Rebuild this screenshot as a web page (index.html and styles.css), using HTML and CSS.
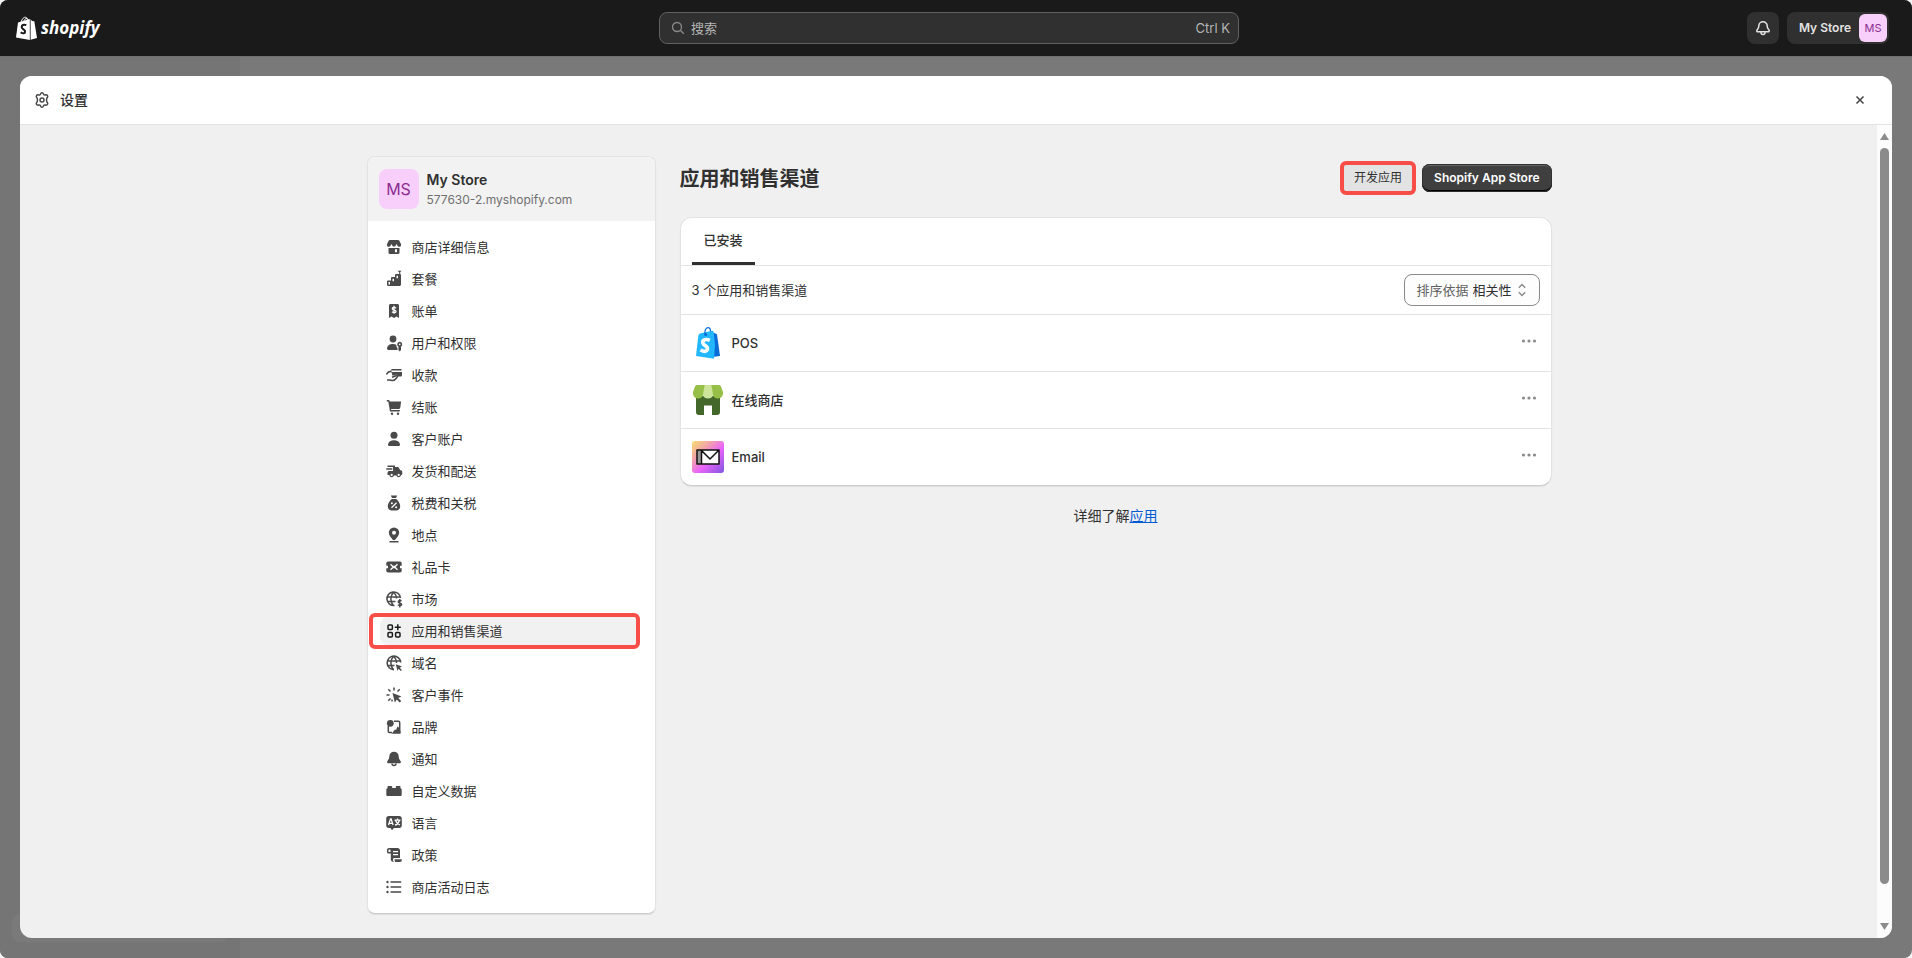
FILE: index.html
```html
<!DOCTYPE html>
<html lang="zh-CN">
<head>
<meta charset="utf-8">
<meta name="viewport" content="width=device-width, initial-scale=1">
<title>设置 · My Store · Shopify</title>
<link rel="stylesheet" href="styles.css">
</head>
<body>
<div class="frame">
  <header class="topbar">
    <a class="logo" href="#" aria-label="shopify">
      <svg class="logo-bag" viewBox="0 0 21 24" aria-hidden="true">
        <path d="M5 6.500C6 2.600 8 .900 9.700 1.300c1.300.3 1.800 1.700 1.900 3.700M7.500 5.800C8.300 3.500 9.600 2.200 11 2.600c.9.300 1.400 1.200 1.600 2.400" fill="none" stroke="#fff" stroke-width="1"/>
        <path d="M2 6.400 13.800 3v21L0 21.500z" fill="#fff"/>
        <path d="m14.600 3.200 1.500 1.700 2.200.3L21 22l-6.400 1.700z" fill="#fff"/>
        <path d="M10.300 9.200C7.600 8 5.500 9.200 5.700 11.200c.2 2.200 3.600 2.300 3.400 4.600-.2 2-2.500 2-4.400.5" fill="none" stroke="#1a1a1a" stroke-width="2"/>
      </svg>
      <span class="logo-text">shopify</span>
    </a>
    <label class="search">
      <svg viewBox="0 0 14 14" aria-hidden="true"><circle cx="6" cy="6" r="4.500"/><path d="m9.300 9.300 3.500 3.500"/></svg>
      <input type="search" placeholder="搜索" aria-label="搜索">
      <kbd>Ctrl K</kbd>
    </label>
    <div class="topbar-actions">
      <button class="bell" type="button" aria-label="通知">
        <svg viewBox="0 0 20 20" aria-hidden="true"><path d="M10 3.700A4.200 4.200 0 0 0 5.800 7.900c0 2.400-1.300 3.200-1.900 4.300-.4.800.1 1.600.9 1.600h10.400c.8 0 1.300-.8.900-1.600-.6-1.100-1.900-1.900-1.900-4.300A4.200 4.200 0 0 0 10 3.700ZM8 14v.6a2 2 0 0 0 4 0V14"/></svg>
      </button>
      <button class="account" type="button"><span>My Store</span><span class="avatar avatar-small">MS</span></button>
    </div>
  </header>

  <div class="backdrop">
    <div class="dimmed-nav"><div class="dimmed-item"></div></div>
    <section class="modal" aria-label="设置">
      <header class="modal-header">
        <svg class="gear" viewBox="0 0 20 20" aria-hidden="true"><path d="M8.600 3.900c.2-.8.600-1.200 1.400-1.200s1.200.4 1.400 1.200c.2.900 1 1.400 1.900 1.100 1.100-.4 1.700-.2 2.200.6.500.8.400 1.300-.3 2-.9.900-.9 3.900 0 4.800.7.700.8 1.200.3 2-.5.800-1.100 1-2.200.6-.9-.3-1.700.2-1.900 1.100-.2.800-.6 1.200-1.400 1.200s-1.200-.4-1.400-1.200c-.2-.9-1-1.400-1.900-1.100-1.100.4-1.700.2-2.200-.6-.5-.8-.4-1.300.3-2 .9-.9.900-3.900 0-4.800-.7-.7-.8-1.200-.3-2 .5-.8 1.100-1 2.200-.6.900.3 1.700-.2 1.900-1.100Z"/><circle cx="10" cy="10" r="2"/></svg>
        <h1>设置</h1>
        <button class="close" type="button" aria-label="关闭"><svg viewBox="0 0 10 10" aria-hidden="true"><path d="m1.500 1.500 7 7m0-7-7 7"/></svg></button>
      </header>
      <div class="modal-body">
        <div class="content">
          <aside class="card sidebar">
            <div class="store">
              <span class="avatar avatar-large">MS</span>
              <div class="store-text"><p class="store-name">My Store</p><p class="store-domain">577630-2.myshopify.com</p></div>
            </div>
            <nav aria-label="设置">
              <ul class="menu">
                <li><a href="#"><svg viewBox="0 0 20 20"><path d="M6 3h8c.7 0 1.200.3 1.500.9L17 7v1.200c0 2-3 2.300-3.600.3L12.600 7l-.9 1.500c-.5 1.500-2.900 1.500-3.400 0L7.400 7l-.8 1.500C6 10.500 3 10.200 3 8.200V7l1.500-3.100C4.800 3.300 5.300 3 6 3z"/><path fill-rule="evenodd" d="M4.500 11h11v4.500A1.500 1.500 0 0 1 14 17H6a1.500 1.500 0 0 1-1.500-1.500zM11 12.200v3h2v-3z"/></svg>商店详细信息</a></li>
                <li><a href="#"><svg viewBox="0 0 20 20"><path d="M13.500 1.800h4l-1.300 1.400v2h-1v-2z"/><path fill-rule="evenodd" d="M3.800 11.500H7V9.200C7 8.500 7.500 8 8.200 8H11V6.200c0-.7.500-1.200 1.200-1.200h3.600c.7 0 1.200.5 1.200 1.200v9.300c0 .8-.7 1.500-1.500 1.500H4.200C3.500 17 3 16.500 3 15.800v-3.300c0-.6.300-1 .8-1zM4.500 13v2.500H6V13zm4-3.200v2.500H10V9.800zm4-3v2.500H14V6.800z"/></svg>套餐</a></li>
                <li><a href="#"><svg viewBox="0 0 20 20"><path d="M6.500 3h7C14.400 3 15 3.600 15 4.500V17l-2.500-1.500L10 17l-2.500-1.500L5 17V4.500C5 3.600 5.600 3 6.500 3z"/><path class="cut" d="M12 7.200C10.800 6 8.300 6.200 8.300 7.700c0 1.800 3.700.9 3.700 2.700 0 1.600-2.700 1.600-4 .4M10 4.800v8"/></svg>账单</a></li>
                <li><a href="#"><svg viewBox="0 0 20 20"><circle cx="9" cy="6" r="3.400"/><path d="M3 15.200C3.300 12.500 6 11 9 11c1.300 0 2.300.2 3.300.7 0 1.500.4 2.500 1.200 3.300v2H4.600C3.700 17 3 16.200 3 15.200z"/><path fill-rule="evenodd" d="M15.700 8.800a2.600 2.600 0 0 1 1.300 4.800V17l-1.300 1.400-1.300-1.400v-3.400a2.600 2.600 0 0 1 1.300-4.800zm0 1.600a.9.900 0 1 0 0 1.800.9.900 0 0 0 0-1.800z"/></svg>用户和权限</a></li>
                <li><a href="#"><svg viewBox="0 0 20 20"><path d="M8 4h9.500v1.500H6zM7 7h11v3.200c0 .8-.6 1.300-1.300 1.300h-3c0-1.500-.9-2-2-1.700L9 10.700c-1-.5-1.300-1.300-.7-2.200z"/><path class="line" d="M2.500 9.500c1.500-3 3-3.500 5-2.700M3 15h2.500c1.500 0 1.800.6 3.200.6 2.300 0 3.500-2.200 4.500-3.600.7-1.100-.2-1.700-1.300-1.300L8 12.200"/></svg>收款</a></li>
                <li><a href="#"><svg viewBox="0 0 20 20"><path d="M2.800 3h1.500c.8 0 1.300.5 1.500 1.500h11.300l-.8 6c-.1.900-.8 1.500-1.700 1.500H7l.2 1h8.600v1.500H6L4.300 4.500H2.800z"/><circle cx="8" cy="16.800" r="1.200"/><circle cx="14" cy="16.800" r="1.200"/></svg>结账</a></li>
                <li><a href="#"><svg viewBox="0 0 20 20"><circle cx="10" cy="6.300" r="3.500"/><path d="M4 15.500C4.400 12.700 7 11.300 10 11.300s5.600 1.400 6 4.200c.1.900-.4 1.500-1.300 1.500H5.300c-.9 0-1.400-.6-1.300-1.500z"/></svg>客户账户</a></li>
                <li><a href="#"><svg viewBox="0 0 20 20"><path d="M3.500 4.500H11V6H3.500zM2.300 7.300h6v1.500h-6z"/><path fill-rule="evenodd" d="M9 6h4.200c.9 0 1.600.5 1.900 1.200l1 1.900 1.200.5c.6.300 1 .8 1 1.500v1.700c0 .8-.5 1.300-1.200 1.300a2.400 2.400 0 0 1-4.700.300H10a2.400 2.400 0 0 1-4.700-.3H3.500v-2.500L4.500 10H9zM7.700 12.800a1.100 1.100 0 1 0 0 2.200 1.100 1.100 0 0 0 0-2.200zm7 0a1.100 1.100 0 1 0 0 2.200 1.100 1.100 0 0 0 0-2.200z"/></svg>发货和配送</a></li>
                <li><a href="#"><svg viewBox="0 0 20 20"><path d="M6.800 2.500h6.400L12 5H8zM7.800 6h4.400c2.400 2 4 4.600 4 7.300 0 2.500-1.600 4.200-4 4.200H7.800c-2.400 0-4-1.700-4-4.200C3.800 10.600 5.400 8 7.800 6z"/><path class="cut" d="m12.500 9.700-5 5"/><circle class="dot" cx="7.900" cy="10.200" r="1"/><circle class="dot" cx="12.100" cy="14.200" r="1"/></svg>税费和关税</a></li>
                <li><a href="#"><svg viewBox="0 0 20 20"><path fill-rule="evenodd" d="M10 2.500A5.200 5.200 0 0 1 15.200 7.700c0 3-3 5.300-3.700 6.900-.4 1-2.600 1-3 0-.7-1.600-3.700-3.900-3.700-6.900A5.200 5.200 0 0 1 10 2.500zm0 3.300a2 2 0 1 0 0 4 2 2 0 0 0 0-4z"/><path d="M5.500 16h9v1.500h-9z"/></svg>地点</a></li>
                <li><a href="#"><svg viewBox="0 0 20 20"><path d="M4 4.500h12A1.700 1.700 0 0 1 17.700 6.200v2.600h-1.700v2.400h1.700v2.600a1.700 1.700 0 0 1-1.700 1.700H4a1.700 1.700 0 0 1-1.700-1.700v-2.600H4V8.800H2.300V6.200A1.700 1.700 0 0 1 4 4.500z"/><path class="cut" d="m6.500 7.300 2.400 2.200h2.200l2.400-2.200M6.500 12.700l2.400-2.200h2.200l2.400 2.200"/></svg>礼品卡</a></li>
                <li><a href="#"><svg viewBox="0 0 20 20"><path class="line" d="M10.500 16.500A6.800 6.800 0 1 1 16.500 9M3.500 8h13M3.500 12.500h8M9.500 3.200c-3.500 4-3.500 9.600 0 13.500M9.800 3.200c1.700 1.800 2.700 3.600 2.700 6.300"/><path class="line" d="M17.500 12c-1-.9-3.300-.7-3.300.7 0 1.600 3.400.9 3.400 2.700 0 1.500-2.600 1.500-3.700.4M15.800 10v8.500"/></svg>市场</a></li>
                <li class="selected"><a href="#" aria-current="page"><svg viewBox="0 0 20 20"><g class="line"><rect x="4" y="4" width="4.400" height="4.400" rx="1"/><rect x="4" y="11.600" width="4.400" height="4.400" rx="1"/><rect x="11.600" y="11.600" width="4.400" height="4.400" rx="1"/><path d="M13.800 3.200v6M10.800 6.200h6"/></g></svg>应用和销售渠道</a></li>
                <li><a href="#"><svg viewBox="0 0 20 20"><path class="line" d="M10 16.700A6.800 6.800 0 1 1 16.700 9.500M3.500 8h13M3.500 12.500h7M9.500 3.200c-3.500 4-3.500 9.600 0 13.500M9.800 3.200c1.700 1.800 2.700 3.600 2.700 6.800"/><path d="m11.800 11.300 6.200 2.200-2.300 1.200 2.200 2.300-1 1-2.300-2.200-1.100 2.200z"/></svg>域名</a></li>
                <li><a href="#"><svg viewBox="0 0 20 20"><path class="line" d="M10 2.500v3M4.300 4.300l2.200 2.200M2.500 10h3M4.300 15.700l2.200-2.200M15.700 4.300l-2.200 2.200M8 14.500v2"/><path d="m8.500 8 9 3.400-3.300 1.700 3 3-1.500 1.500-3-3-1.800 3.200z"/></svg>客户事件</a></li>
                <li><a href="#"><svg viewBox="0 0 20 20"><circle cx="6.300" cy="6.300" r="3.400"/><path class="line" d="M10 4.200h4.500c.7 0 1.200.5 1.200 1.200V16M4.300 9v5.300c0 .7.500 1.200 1.200 1.200h2.500"/><path d="m7.700 16.800 2.800-3.800c.5-.7 1.100-.7 1.600 0l1-2.800c.4-.8 1-.8 1.400 0l2 4v2.600z"/></svg>品牌</a></li>
                <li><a href="#"><svg viewBox="0 0 20 20"><path d="M10 2.700a4.700 4.700 0 0 0-4.700 4.700c0 2.400-1.200 3.400-2 4.800-.5 1 .1 2.100 1.200 2.100h11c1.100 0 1.700-1.100 1.200-2.100-.8-1.400-2-2.400-2-4.800A4.700 4.700 0 0 0 10 2.700z"/><path class="line" d="M8 14.500c0 2.700 4 2.700 4 0"/></svg>通知</a></li>
                <li><a href="#"><svg viewBox="0 0 20 20"><path d="M4.500 5h2.700c.6 0 1 .4 1 1v1h3.600V6c0-.6.4-1 1-1h2.700c.6 0 1 .4 1 1v1.200c.7.200 1.200.7 1.200 1.500v5c0 .8-.5 1.300-1.300 1.300H3.600c-.8 0-1.300-.5-1.300-1.300v-5c0-.8.500-1.300 1.200-1.500V6c0-.6.400-1 1-1z"/></svg>自定义数据</a></li>
                <li><a href="#"><svg viewBox="0 0 20 20"><path d="M4.700 3h10.600c1.500 0 2.500 1 2.500 2.500v7c0 1.500-1 2.500-2.500 2.500H10l-2 2.200L6.500 15H4.700c-1.500 0-2.500-1-2.500-2.500v-7C2.200 4 3.200 3 4.700 3z"/><path class="cut" d="m4.500 12 2-6h.6l2 6M5.200 10.300h3.300M10.500 7.200h6M13.500 5.500v1.700M15.300 7.500c-.5 2.200-2 4-4.300 4.600M11.500 7.500c.8 2.200 2.300 3.800 4.500 4.500"/></svg>语言</a></li>
                <li><a href="#"><svg viewBox="0 0 20 20"><path fill-rule="evenodd" d="M5 3h8.500C14.900 3 16 4.100 16 5.500V13h-5.500c-1 0-1.500.6-1.500 1.500 0 1.200.5 2 1 2.500-2 0-3.200-1-3.200-2.800V8.500H4.500C3.700 8.500 3 7.800 3 7V5c0-1.100.9-2 2-2zm.3 1.500c-.5 0-.8.3-.8.800V7h2V5.300c0-.5-.5-.8-1.200-.8zM9 6v1.300h5V6zm0 3v1.300h5V9z"/><path d="M10.500 14.300h7.300v.7c0 1.200-.8 2-2 2h-4.500c-.5-.8-.8-1.600-.8-2.700z"/></svg>政策</a></li>
                <li><a href="#"><svg viewBox="0 0 20 20"><path d="M6.500 4.200h10.700v1.600H6.500zm0 5h10.700v1.600H6.500zm0 5h10.700v1.600H6.500z"/><circle cx="3.500" cy="5" r="1.200"/><circle cx="3.500" cy="10" r="1.200"/><circle cx="3.500" cy="15" r="1.200"/></svg>商店活动日志</a></li>
              </ul>
            </nav>
          </aside>

          <main class="main">
            <div class="page-header">
              <h2>应用和销售渠道</h2>
              <button class="button button-plain" type="button">开发应用</button>
              <button class="button button-primary" type="button">Shopify App Store</button>
            </div>
            <section class="card apps">
              <div class="tabs" role="tablist"><button class="tab" type="button" role="tab" aria-selected="true">已安装</button></div>
              <div class="filter">
                <p>3 个应用和销售渠道</p>
                <div class="sort">
                  <label for="sort">排序依据</label>
                  <select id="sort"><option>相关性</option></select>
                  <svg viewBox="0 0 10 14" aria-hidden="true"><path d="M1.800 4.800 5 1.600l3.200 3.200M1.800 9.200 5 12.400l3.200-3.200"/></svg>
                </div>
              </div>
              <ul class="app-list">
                <li>
                  <svg class="app-icon" viewBox="0 0 32 32" aria-hidden="true">
                    <path d="m20 5 5 2.200L28 29l-8 1z" fill="#0a6cd6"/>
                    <path d="M8 6.500 20 3.800c1 0 1.500.5 1.600 1.200L23 18l-1 13.700L4 29 6.300 9c.2-1.300.7-2 1.700-2.500z" fill="#22b8ff"/>
                    <path d="M13.500 8.500C12 4.500 13.500.600 16 .600c1.500 0 2.500 1.300 2.500 3.800" fill="none" stroke="#0a6cd6" stroke-width="1.200"/>
                    <circle cx="13.700" cy="7.600" r="1.500" fill="#0a6cd6"/>
                    <path d="M17.800 13.300C14 11.500 10.500 12.800 10.700 15.600c.2 3.200 5.200 3 4.800 6.300-.4 3-4 3.200-7 1" fill="none" stroke="#fff" stroke-width="3.600"/>
                  </svg>
                  <span>POS</span>
                  <button class="more" type="button" aria-label="POS 的更多操作"><svg viewBox="0 0 16 4"><circle cx="2.500" cy="2" r="1.600"/><circle cx="8" cy="2" r="1.600"/><circle cx="13.500" cy="2" r="1.600"/></svg></button>
                </li>
                <li>
                  <svg class="app-icon" viewBox="0 0 32 32" aria-hidden="true">
                    <path d="M4 12h24v16a3 3 0 0 1-3 3h-5v-9.500h-8V31H7a3 3 0 0 1-3-3z" fill="#44682b"/>
                    <path d="M5.500 1h21c1.200 0 2 .5 2.500 1.500L31 8c.5 3-1.500 6.500-5 6.500-3 0-4.500-1.200-5-3.500H11c-.5 2.300-2 3.500-5 3.500C2.500 14.500.5 11 1 8l2-5.500C3.500 1.500 4.300 1 5.500 1z" fill="#95bf46"/>
                    <path d="M12.700 1h6.600l1.700 9c0 3-2.200 4.500-5 4.500S11 13 11 10z" fill="#cde59b"/>
                  </svg>
                  <span>在线商店</span>
                  <button class="more" type="button" aria-label="在线商店的更多操作"><svg viewBox="0 0 16 4"><circle cx="2.500" cy="2" r="1.600"/><circle cx="8" cy="2" r="1.600"/><circle cx="13.500" cy="2" r="1.600"/></svg></button>
                </li>
                <li>
                  <svg class="app-icon" viewBox="0 0 32 32" aria-hidden="true">
                    <defs><linearGradient id="mail" x1="0" y1="0" x2="1" y2="1"><stop offset="0" stop-color="#f8e070"/><stop offset=".3" stop-color="#f3a4a8"/><stop offset=".58" stop-color="#ea64fb"/><stop offset="1" stop-color="#7f55df"/></linearGradient></defs>
                    <rect width="32" height="32" rx="3" fill="url(#mail)"/>
                    <path d="M5 9h22v14H5z" fill="#fff"/><path d="M5 9h4v14H5z" fill="#999"/>
                    <path d="M5 9h22v14H5zM9.500 9v14M9.500 9.500 18 18l8.500-8.500" fill="none" stroke="#111" stroke-width="1.500" stroke-linejoin="round"/>
                  </svg>
                  <span>Email</span>
                  <button class="more" type="button" aria-label="Email 的更多操作"><svg viewBox="0 0 16 4"><circle cx="2.500" cy="2" r="1.600"/><circle cx="8" cy="2" r="1.600"/><circle cx="13.500" cy="2" r="1.600"/></svg></button>
                </li>
              </ul>
            </section>
            <p class="help">详细了解<a href="#">应用</a></p>
          </main>
        </div>
        <div class="scrollbar" aria-hidden="true">
          <svg viewBox="0 0 9 7"><path d="M4.500 0 9 7H0z"/></svg>
          <div class="scroll-track"><div class="thumb"></div></div>
          <svg viewBox="0 0 9 7"><path d="M4.500 7 9 0H0z"/></svg>
        </div>
      </div>
    </section>
  </div>
</div>
</body>
</html>
```
FILE: styles.css
```css
* { box-sizing: border-box; }

body {
  margin: 0;
  background: #f4f4f4;
  color: #303030;
  font: 400 13px/20px Inter, "Noto Sans CJK SC", sans-serif;
}

h1, h2, p, ul { margin: 0; padding: 0; }
ul { list-style: none; }
button, input, select, kbd { font: inherit; color: inherit; }
button { margin: 0; padding: 0; border: 0; background: none; cursor: pointer; }
svg { display: block; flex: none; }

.frame {
  display: flex;
  flex-direction: column;
  min-height: 100vh;
  overflow: hidden;
  border-radius: 8px;
  background: #797979;
}

/* Top bar */
.topbar {
  display: grid;
  grid-template-columns: 1fr minmax(200px, 580px) 1fr;
  align-items: center;
  height: 56px;
  padding: 0 23px 0 9px;
  background: #1a1a1a;
}
.logo {
  display: flex;
  align-items: center;
  gap: 4px;
  padding-left: 7px;
  color: #fff;
  text-decoration: none;
}
.logo-bag { width: 21px; height: 24px; }
.logo-text { font: italic 700 17px/24px "Open Sans", sans-serif; }
.search {
  display: flex;
  align-items: center;
  gap: 6px;
  height: 32px;
  padding: 0 8px 0 11px;
  border: 1px solid #616161;
  border-radius: 8px;
  background: #303030;
  color: #b5b5b5;
}
.search svg { width: 14px; height: 14px; fill: none; stroke: #8a8a8a; stroke-width: 1.3; }
.search input { flex: 1; min-width: 0; padding: 0; border: 0; outline: 0; background: none; }
.search input::placeholder { color: #b5b5b5; opacity: 1; }
.topbar-actions { display: flex; justify-content: flex-end; gap: 8px; }
.bell {
  display: grid;
  place-items: center;
  width: 32px;
  height: 32px;
  border-radius: 8px;
  background: #303030;
}
.bell svg { width: 20px; height: 20px; fill: none; stroke: #e3e3e3; stroke-width: 1.5; }
.account {
  display: flex;
  align-items: center;
  gap: 8px;
  height: 32px;
  padding: 0 2px 0 12px;
  border-radius: 8px;
  background: #303030;
  color: #e3e3e3;
  font-size: 12px;
  font-weight: 600;
}
.avatar {
  display: grid;
  place-items: center;
  flex: none;
  background: #f8cffb;
  color: #8b2d91;
  font-weight: 400;
}
.avatar-small { width: 28px; height: 28px; border-radius: 6px; font-size: 11px; }
.avatar-large { width: 40px; height: 40px; border-radius: 8px; font-size: 16px; }

/* Dimmed page behind the dialog */
.backdrop { position: relative; display: flex; flex: 1; padding: 19px 20px 20px; border-top: 1px solid #707070; }
.dimmed-nav {
  position: absolute;
  inset: 0 auto 0 0;
  display: flex;
  align-items: flex-end;
  width: 240px;
  padding: 16px 12px;
  background: #757575;
}
.dimmed-item { width: 216px; height: 28px; border-radius: 8px; background: #7a7a7a; }

/* Dialog */
.modal {
  position: relative;
  display: flex;
  flex: 1;
  flex-direction: column;
  min-width: 0;
  overflow: hidden;
  border-radius: 12px;
  background: #f0f0f0;
}
.modal-header {
  display: flex;
  align-items: center;
  gap: 8px;
  height: 48px;
  padding: 0 22px 0 12px;
  background: #fff;
  box-shadow: 0 1px 0 #e3e3e3;
}
.gear { width: 20px; height: 20px; fill: none; stroke: #4a4a4a; stroke-width: 1.5; }
.modal-header h1 { flex: 1; font-size: 14px; line-height: 20px; font-weight: 500; }
.close { display: grid; place-items: center; width: 20px; height: 20px; }
.close svg { width: 10px; height: 10px; fill: none; stroke: #4a4a4a; stroke-width: 1.6; }
.modal-body { display: flex; flex: 1; padding-top: 1px; }
.modal-body::before { content: ""; width: 21px; }
.content {
  display: grid;
  grid-template-columns: 289px minmax(0, 1fr);
  align-items: start;
  gap: 24px;
  flex: 1;
  max-width: 1233px;
  margin: 0 auto;
  padding: 31px 24px 24px;
}
.scrollbar {
  display: flex;
  flex-direction: column;
  align-items: center;
  gap: 8px;
  width: 15px;
  padding: 8px 0;
  background: #fcfcfc;
}
.scrollbar svg { width: 9px; height: 7px; fill: #8b8b8b; }
.scroll-track { flex: 1; width: 9px; }
.thumb { height: 96%; border-radius: 5px; background: #8b8b8b; }

/* Cards */
.card {
  border: 1px solid #e3e3e3;
  border-bottom-color: #ccc;
  background: #fff;
  box-shadow: 0 1px 1px #00000014;
}
.sidebar { overflow: hidden; border-radius: 8px; }
.store {
  display: flex;
  align-items: center;
  gap: 8px;
  height: 64px;
  padding: 12px 11px;
  background: #f2f2f2;
}
.store-text { padding-top: 2px; }
.store-name { font-size: 14px; font-weight: 600; }
.store-domain { color: #707070; font-size: 12px; }
.menu {
  display: flex;
  flex-direction: column;
  gap: 4px;
  padding: 12px 15px 12px 12px;
}
.menu li { position: relative; }
.menu a {
  display: flex;
  align-items: center;
  gap: 8px;
  height: 28px;
  padding: 0 4px;
  border-radius: 8px;
  color: inherit;
  text-decoration: none;
}
.menu svg { width: 20px; height: 20px; fill: #4a4a4a; }
.menu .line { fill: none; stroke: #4a4a4a; stroke-width: 1.5; stroke-linejoin: round; }
.menu .cut { fill: none; stroke: #fff; stroke-width: 1.3; }
.menu .dot { fill: #fff; }
.selected a { background: #f1f1f1; }
.menu .selected .line { stroke: #1a1a1a; }
.selected::after {
  content: "";
  position: absolute;
  inset: -4px 0 -4px -11px;
  border: 4px solid #f94d48;
  border-radius: 6px;
}

/* Apps page */
.page-header { display: flex; align-items: center; gap: 6px; height: 44px; margin-bottom: 17px; }
.page-header h2 { flex: 1; padding-top: 2px; font-size: 20px; line-height: 28px; font-weight: 700; }
.button { font-size: 12px; line-height: 16px; white-space: nowrap; }
.button-plain {
  height: 34px;
  padding: 0 10px;
  border: 4px solid #f94d48;
  border-radius: 6px;
  background: #e3e3e3;
}
.button-primary {
  height: 28px;
  padding: 0 12px;
  border-radius: 8px;
  background: #3f3f3f;
  box-shadow: inset 0 0 0 1px #303030, inset 0 2px 0 #666, inset 0 -2px 0 #000;
  color: #fff;
  font-weight: 600;
}
.apps { overflow: hidden; border-radius: 12px; }
.tabs { display: flex; padding: 0 11px; border-bottom: 1px solid #e3e3e3; }
.tab {
  height: 47px;
  padding: 0 12px;
  border-bottom: 3px solid #303030;
  font-weight: 500;
}
.filter {
  display: flex;
  align-items: center;
  justify-content: space-between;
  height: 49px;
  padding: 0 11px;
  border-bottom: 1px solid #e3e3e3;
}
.sort {
  position: relative;
  display: flex;
  align-items: center;
  gap: 4px;
  height: 32px;
  padding: 0 12px 0 11px;
  border: 1px solid #8a8a8a;
  border-radius: 8px;
  background: #fdfdfd;
}
.sort label { color: #616161; }
.sort select {
  margin-right: -17px;
  padding: 0 17px 0 0;
  border: 0;
  outline: 0;
  background: none;
  appearance: none;
}
.sort svg { width: 10px; height: 14px; fill: none; stroke: #8a8a8a; stroke-width: 1.4; pointer-events: none; }
.app-list li {
  display: flex;
  align-items: center;
  gap: 8px;
  height: 57px;
  padding: 0 14px 0 11px;
  border-bottom: 1px solid #e3e3e3;
}
.app-list li:last-child { border-bottom: 0; height: 56px; }
.app-list span { flex: 1; font-weight: 500; }
.app-icon { width: 32px; height: 32px; }
.more { padding: 6px 0 10px; }
.more svg { width: 16px; height: 4px; fill: #8a8a8a; }
.help { margin-top: 20px; font-size: 14px; text-align: center; }
.help a { color: #005bd3; }
```
